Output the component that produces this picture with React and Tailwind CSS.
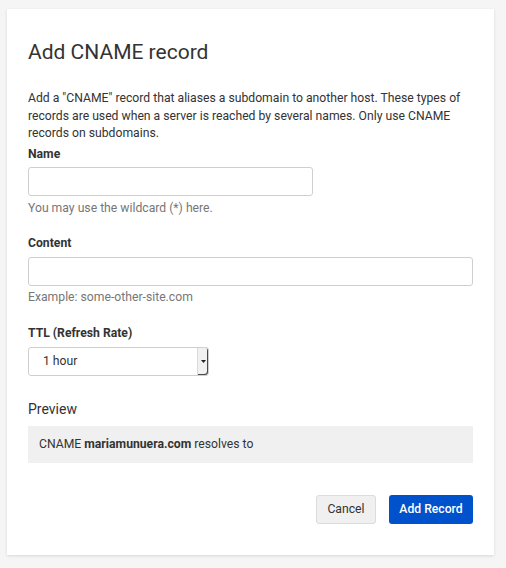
import { useState } from 'react';

// Small dropdown stepper drawn like a native select's arrow button
const SelectArrow = () => (
  <div className="flex h-full w-[11px] items-center justify-center rounded-r-[3px] border-l border-[#d9d9d9] bg-[#f1f1f1] shadow-[inset_-1px_-1px_0_#4a4a4a]">
    <svg width="5" height="3" viewBox="0 0 5 3">
      <path d="M0 0h5L2.5 3z" fill="#222" />
    </svg>
  </div>
);

function App() {
  const [name, setName] = useState('');
  const [content, setContent] = useState('');

  return (
    <div
      className="min-h-[568px] bg-[#f5f5f5] pt-[9px] pl-[7px]"
      style={{ fontFamily: 'Roboto, "Liberation Sans", sans-serif' }}
    >
      <div className="w-[487px] h-[546px] bg-white px-[21px] pt-[29px] text-[#333] shadow-[0_1px_3px_rgba(0,0,0,0.12)]">
        <h1 className="text-[21px] leading-[28px] font-normal text-[#333]">Add CNAME record</h1>

        <p className="mt-[24px] text-[12.2px] leading-[17.5px]">
          Add a "CNAME" record that aliases a subdomain to another host. These types of records are used when
          a server is reached by several names. Only use CNAME records on subdomains.
        </p>

        {/* Name */}
        <label className="mt-[3px] block text-[12.2px] leading-[17.5px] font-bold">Name</label>
        <input
          value={name}
          onChange={(e) => setName(e.target.value)}
          className="mt-[4px] block h-[29px] w-[285px] rounded-[3px] border border-[#cfcfcf] px-2 text-[12.2px] outline-none"
        />
        <p className="mt-[4px] text-[12.2px] leading-[17.5px] text-[#777]">You may use the wildcard (*) here.</p>

        {/* Content */}
        <label className="mt-[17px] block text-[12.2px] leading-[17.5px] font-bold">Content</label>
        <input
          value={content}
          onChange={(e) => setContent(e.target.value)}
          className="mt-[5px] block h-[29px] w-full rounded-[3px] border border-[#cfcfcf] px-2 text-[12.2px] outline-none"
        />
        <p className="mt-[3px] text-[12.2px] leading-[17.5px] text-[#777]">Example: some-other-site.com</p>

        {/* TTL */}
        <label className="mt-[18px] block text-[12.2px] leading-[17.5px] font-bold">TTL (Refresh Rate)</label>
        <div className="mt-[5px] flex h-[29px] w-[181px] items-center rounded-[3px] border border-[#cfcfcf]">
          <span className="flex-1 pl-[14px] text-[12.2px]">1 hour</span>
          <SelectArrow />
        </div>

        {/* Preview */}
        <h2 className="mt-[23px] text-[14px] leading-[20px] font-normal">Preview</h2>
        <div className="mt-[7px] flex h-[37px] items-center bg-[#f0f0f0] px-[11px] text-[12.2px]">
          <span>
            CNAME <b>mariamunuera.com</b> resolves to
          </span>
        </div>

        <div className="mt-[32px] flex justify-end gap-[13px]">
          <button className="h-[29px] w-[60px] rounded-[3px] border border-[#dcdcdc] bg-[#f0f0f0] text-[12.2px] text-[#333]">
            Cancel
          </button>
          <button className="h-[29px] w-[84px] rounded-[3px] bg-[#0052cc] text-[12.2px] font-medium text-white">
            Add Record
          </button>
        </div>
      </div>
    </div>
  );
}

export default App;
